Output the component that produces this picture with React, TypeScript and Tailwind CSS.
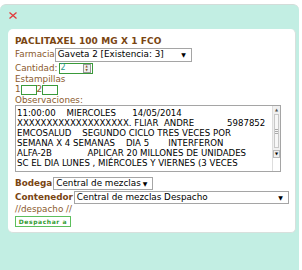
import React from "react";

const F = { fontFamily: '"DejaVu Sans", Verdana, sans-serif' } as const;

function Sel({ w, h, text, cls = "" }: { w: string; h: string; text: string; cls?: string }) {
  return (
    <div className={`flex items-center justify-between border border-[#a5a5a5] bg-white pl-[2px] pr-[5px] text-[8.8px] text-black ${w} ${h} ${cls}`}>
      <span className="whitespace-pre leading-none">{text}</span>
      <span className="text-[6px] leading-none">▼</span>
    </div>
  );
}

const lines = [
  "11:00:00    MIERCOLES      14/05/2014",
  "XXXXXXXXXXXXXXXXXXX. FLIAR  ANDRE            5987852",
  "EMCOSALUD    SEGUNDO CICLO TRES VECES POR",
  "SEMANA X 4 SEMANAS    DIA 5       INTERFERON",
  "ALFA-2B             APLICAR 20 MILLONES DE UNIDADES",
  "SC EL DIA LUNES , MIÉRCOLES Y VIERNES (3 VECES",
];

export default function App() {
  return (
    <div className="w-[302px] h-[270px] bg-white overflow-hidden" style={F}>
      <div className="mt-[4px] w-[299px] h-[266px] bg-[#c2eee3] rounded-t-[6px] border-t border-[#d3dcd9] pt-[7px]">
        <div className="pl-[9px] h-[17px]">
          <svg width="8" height="7" viewBox="0 0 8 7">
            <path d="M0.5 0.5 L7.5 6.5 M7.5 0.5 L0.5 6.5" stroke="#e23a3a" strokeWidth="1.3" />
          </svg>
        </div>
        <div className="ml-[8px] w-[288px] h-[204px] bg-white rounded-[5px] border-r border-b border-[#d8e0dd] pl-[7px] pt-[6px] text-[#8a5a2c]">
          <div className="h-[12px] text-[9px] font-bold leading-[12px] text-[#7a4512] tracking-[0.1px]">
            PACLITAXEL 100 MG X 1 FCO
          </div>
          <div className="flex items-center h-[15px]">
            <span className="text-[8.8px] leading-none">Farmacia</span>
            <Sel w="w-[137px]" h="h-[14px]" text="Gaveta 2 [Existencia: 3]" />
          </div>
          <div className="flex items-center h-[12px]">
            <span className="text-[8.8px] leading-none">Cantidad:</span>
            <div className="ml-[1px] flex items-center justify-between w-[34px] h-[11px] border border-[#3a9a3a] bg-white">
              <span className="pl-[1px] text-[8px] leading-none text-[#2a9a8a]">2</span>
              <div className="w-[8px] h-[9px] border border-[#999] bg-[#eee] flex flex-col items-center justify-center mr-[1px]">
                <span className="text-[3px] leading-[4px]">▲</span>
                <span className="text-[3px] leading-[4px]">▼</span>
              </div>
            </div>
          </div>
          <div className="h-[10px] text-[8.8px] leading-[10px]">Estampillas</div>
          <div className="flex items-center h-[11px] text-[8.8px] leading-none">
            <span>1</span>
            <div className="w-[16px] h-[10px] border border-[#3a9a3a] bg-white" />
            <span>2</span>
            <div className="w-[16px] h-[10px] border border-[#3a9a3a] bg-white" />
          </div>
          <div className="h-[10px] text-[8.8px] leading-[10px]">Observaciones:</div>
          <div className="flex w-[266px] h-[67px] border border-[#a5a5a5] bg-white">
            <div className="flex-1 pl-[1px] pt-[2px] text-[8.6px] leading-[10px] text-black whitespace-pre overflow-hidden">
              {lines.map((l, i) => (
                <div key={i}>{l}</div>
              ))}
            </div>
            <div className="w-[8px] flex flex-col bg-[#f0f0f0] border-l border-[#ddd]">
              <div className="h-[8px] flex items-center justify-center text-[4px] text-[#555]">▲</div>
              <div className="mx-[1px] h-[34px] border border-[#c8c8c8] bg-[#f7f7f7] flex flex-col items-center justify-center gap-[1px]">
                <div className="w-[3px] h-px bg-[#aaa]" />
                <div className="w-[3px] h-px bg-[#aaa]" />
                <div className="w-[3px] h-px bg-[#aaa]" />
              </div>
              <div className="mt-[2px] h-[8px] flex items-center justify-center text-[4px] text-black border border-[#bbb]">▼</div>
              <div className="flex-1 bg-white" />
            </div>
          </div>
          <div className="mt-[5px] flex items-center h-[13px]">
            <span className="text-[8.8px] font-bold leading-none text-[#7a4512]">Bodega</span>
            <Sel w="w-[100px]" h="h-[13px]" text="Central de mezclas" cls="ml-[1px]" />
          </div>
          <div className="mt-[1px] flex items-center h-[13px]">
            <span className="text-[8.8px] font-bold leading-none text-[#7a4512]">Contenedor</span>
            <Sel w="w-[215px]" h="h-[13px]" text="Central de mezclas Despacho" cls="ml-[1px]" />
          </div>
          <div className="h-[11px] text-[8.8px] leading-[11px]">//despacho //</div>
          <div className="mt-[1px] flex items-center justify-center w-[56px] h-[11px] border border-[#5cbf5c] bg-white text-[6px] font-bold tracking-[0.6px] text-[#2e9a2e] leading-none">
            Despachar a
          </div>
        </div>
      </div>
    </div>
  );
}
